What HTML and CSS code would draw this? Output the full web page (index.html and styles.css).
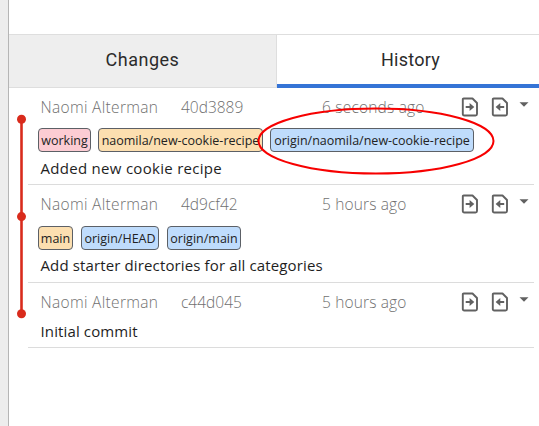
FILE: index.html
```html
<!DOCTYPE html>
<html lang="en">
<head>
<meta charset="utf-8">
<title>History</title>
<link rel="stylesheet" href="styles.css">
</head>
<body>
<svg class="defs" width="0" height="0">
  <symbol id="file-in" viewBox="0 0 18 20">
    <path d="M2.8 1.5H11.5L16 6V17Q16 18.5 14.5 18.5H3.3Q1.8 18.5 1.8 17V2.5Q1.8 1.5 2.8 1.5Z" fill="none" stroke="#616161" stroke-width="1.9" stroke-linejoin="round"/>
    <path d="M4.7 9H8.6V6L13.3 10L8.6 14V11H4.7Z" fill="#616161"/>
  </symbol>
  <symbol id="file-out" viewBox="0 0 18 20">
    <path d="M2.8 1.5H11.5L16 6V17Q16 18.5 14.5 18.5H3.3Q1.8 18.5 1.8 17V2.5Q1.8 1.5 2.8 1.5Z" fill="none" stroke="#616161" stroke-width="1.9" stroke-linejoin="round"/>
    <path d="M13.2 9H9.3V6L4.6 10L9.3 14V11H13.2Z" fill="#616161"/>
  </symbol>
  <symbol id="caret" viewBox="0 0 10 5"><path d="M.5 .3H9.5L5 4.8Z" fill="#616161"/></symbol>
</svg>
<div class="app">
  <div class="rail"></div>
  <main class="panel">
    <div class="toolbar"></div>
    <nav class="tabs">
      <div class="tab">Changes</div>
      <div class="tab active">History</div>
    </nav>
    <div class="history">
      <svg class="graph" width="19" height="260" viewBox="0 0 19 260">
        <path d="M12.5 31.5V225.5" stroke="#d92b1c" stroke-width="2.6"/>
        <circle cx="12.5" cy="31.3" r="4.5" fill="#d92b1c"/>
        <circle cx="12.5" cy="128.6" r="4.5" fill="#d92b1c"/>
        <circle cx="12.5" cy="225.7" r="4.5" fill="#d92b1c"/>
      </svg>
      <div class="commits">
        <article class="commit first">
          <div class="meta"><span class="author">Naomi Alterman</span><span class="hash">40d3889</span><span class="time recent">6 seconds ago</span><svg class="icon"><use href="#file-in"/></svg><svg class="icon"><use href="#file-out"/></svg><svg class="caret"><use href="#caret"/></svg></div>
          <div class="tags"><span class="tag working">working</span><span class="tag local">naomila/new-cookie-recipe</span><span class="tag remote feature">origin/naomila/new-cookie-recipe</span></div>
          <div class="message m1">Added new cookie recipe</div>
        </article>
        <article class="commit second">
          <div class="meta"><span class="author">Naomi Alterman</span><span class="hash">4d9cf42</span><span class="time">5 hours ago</span><svg class="icon"><use href="#file-in"/></svg><svg class="icon"><use href="#file-out"/></svg><svg class="caret"><use href="#caret"/></svg></div>
          <div class="tags"><span class="tag main">main</span><span class="tag remote head">origin/HEAD</span><span class="tag remote origin-main">origin/main</span></div>
          <div class="message m2">Add starter directories for all categories</div>
        </article>
        <article class="commit third">
          <div class="meta"><span class="author">Naomi Alterman</span><span class="hash">c44d045</span><span class="time">5 hours ago</span><svg class="icon"><use href="#file-in"/></svg><svg class="icon"><use href="#file-out"/></svg><svg class="caret"><use href="#caret"/></svg></div>
          <div class="message m3">Initial commit</div>
        </article>
      </div>
    </div>
  </main>
</div>
<svg class="annotation" width="240" height="72" viewBox="0 0 240 72"><ellipse cx="120" cy="36" rx="117.5" ry="32.5" fill="none" stroke="#f70000" stroke-width="2"/></svg>
</body>
</html>
```
FILE: styles.css
```css
* { box-sizing: border-box; }
body { margin: 0; width: 539px; height: 426px; overflow: hidden; background: #fff; font-family: "Open Sans", sans-serif; }
.defs { position: absolute; }
.app { display: flex; height: 426px; }
.rail { width: 9px; background: #ededed; border-right: 1px solid #b5b5b5; }
.panel { flex: 1; min-width: 0; }
.toolbar { height: 34px; }
.tabs { display: flex; height: 54px; border-top: 1px solid #dedede; }
.tab { width: 268px; background: #eee; border-right: 1px solid #dedede; border-bottom: 1px solid #dedede; font: 18px/50px Roboto, sans-serif; letter-spacing: .5px; text-align: center; color: #2b2b2b; }
.tab.active { width: 262px; letter-spacing: .25px; background: #fff; border-right: 0; border-bottom: 4px solid #3574d6; padding-left: 5px; }
.history { display: flex; }
.graph { width: 19px; flex: none; }
.commits { width: 506px; }
.commit { border-bottom: 1px solid #dcdcdc; }
.first { height: 97px; }
.second { height: 98px; }
.third { height: 65px; }
.meta { display: flex; height: 40px; padding: 9px 0 0 12.5px; font-size: 15.5px; font-weight: 320; line-height: 20px; color: #707070; white-space: nowrap; }
.author { width: 140.5px; letter-spacing: .32px; }
.hash { width: 141px; }
.time { width: 139px; letter-spacing: .15px; }
.time.recent { letter-spacing: .2px; }
.icon { width: 18px; height: 20px; margin-right: 12px; flex: none; }
.caret { width: 10px; height: 5px; margin-top: 5px; margin-left: -2px; flex: none; }
.tags { display: flex; height: 24px; padding-left: 10px; }
.tag { height: 24px; border: 1px solid #5c6066; border-radius: 4px; font-size: 12.5px; line-height: 24px; text-align: center; white-space: nowrap; color: #222; }
.working { width: 53px; margin-right: 7px; background: #fcccd3; }
.local { width: 165px; margin-right: 7px; background: #fcdfb0; }
.remote { background: #bfdcfc; }
.feature { width: 204px; }
.main { width: 35px; margin-right: 8px; background: #fcdfb0; }
.head { width: 78px; margin-right: 8px; }
.origin-main { width: 74px; }
.second .meta, .third .meta { height: 41px; }
.message { padding: 6px 0 0 12.5px; font-size: 15px; line-height: 20px; letter-spacing: .13px; color: #1e1e1e; white-space: nowrap; }
.m1 { letter-spacing: .29px; }
.second .message { padding-top: 5px; }
.third .message { padding-top: 0; margin-top: -3px; }
.annotation { position: absolute; left: 256px; top: 105px; }
```
